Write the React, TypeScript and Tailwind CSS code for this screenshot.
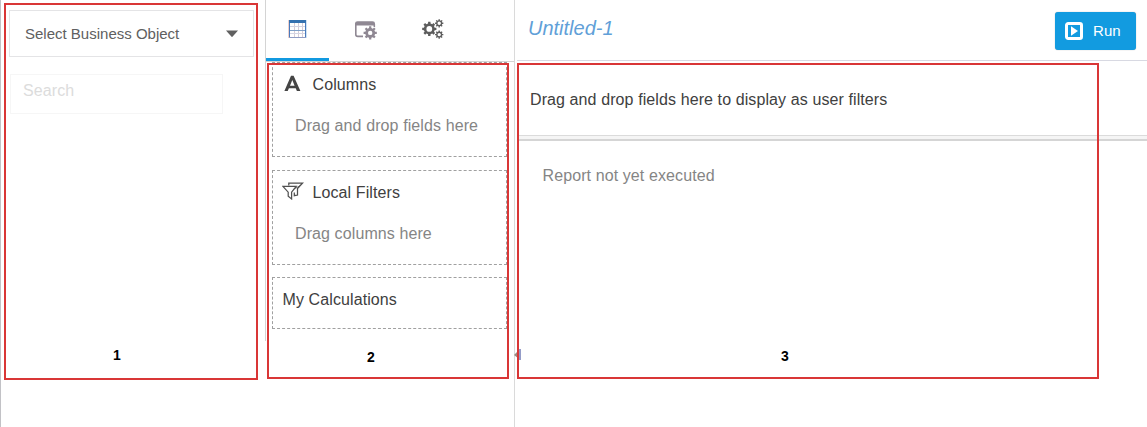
import React from "react";

function Zone({ className, children }: { className: string; children: React.ReactNode }) {
  return (
    <section className={`ml-[6px] w-[235px] shrink-0 border border-dashed border-[#a0a0a0] ${className}`}>
      {children}
    </section>
  );
}

function GridIcon() {
  return (
    <svg width="20" height="18" viewBox="0 0 20 18" shapeRendering="crispEdges">
      <rect x="1" y="0" width="18" height="18" fill="#fff" />
      <path d="M6.5 3v14M10.5 3v14M14.5 3v14" stroke="#d8cdd6" />
      <path d="M2 6.5h16M2 13.5h16" stroke="#d3d5e4" />
      <path d="M2 10.5h16" stroke="#7fa0c8" />
      <path d="M.5 0v18" stroke="#ecd0cc" />
      <path d="M18.5 0v18" stroke="#cfe3f5" />
      <path d="M1.5 0v18M17.5 0v18" stroke="#4a7abc" />
      <path d="M1 17.5h17" stroke="#8f9cc4" />
      <rect x="1" y="0" width="17" height="3" fill="#3572b0" />
    </svg>
  );
}

function gearPath(cx: number, cy: number, ro: number, ri: number, teeth: number, hole: number) {
  let d = "";
  for (let i = 0; i < teeth; i++) {
    const a = (i * 2 * Math.PI) / teeth;
    const s = Math.PI / teeth;
    const pts: [number, number][] = [
      [ri, a - s * 0.58],
      [ro, a - s * 0.42],
      [ro, a + s * 0.42],
      [ri, a + s * 0.58],
    ];
    for (const [r, t] of pts) {
      d += `${d ? "L" : "M"}${(cx + r * Math.cos(t)).toFixed(2)} ${(cy + r * Math.sin(t)).toFixed(2)}`;
    }
  }
  return `${d}ZM${cx - hole} ${cy}a${hole} ${hole} 0 1 0 ${2 * hole} 0a${hole} ${hole} 0 1 0 ${-2 * hole} 0Z`;
}

function WindowGearIcon() {
  return (
    <svg width="23" height="20" viewBox="0 0 23 20">
      <path d="M0 4a2.5 2.5 0 0 1 2.5-2.7h15A2.5 2.5 0 0 1 20 4v1.5H0Z" fill="#8f8893" />
      <path d="M.8 4v10.5q0 1.9 2 1.9H8M19.3 4v3" fill="none" stroke="#8f8893" strokeWidth="1.6" />
      <circle cx="15.2" cy="12.9" r="7" fill="#fff" />
      <path d={gearPath(15.2, 12.9, 6.7, 5, 8, 2.2)} fill="#8f8893" fillRule="evenodd" />
    </svg>
  );
}

function GearsIcon() {
  return (
    <svg width="22" height="20" viewBox="0 0 22 20" fill="#5d5d5d" fillRule="evenodd">
      <path d={gearPath(7.3, 9.9, 7.2, 5.5, 8, 2.9)} />
      <path d={gearPath(17.2, 4.3, 4.2, 3.1, 8, 1.7)} />
      <path d={gearPath(17.2, 15.6, 4.2, 3.1, 8, 1.7)} />
    </svg>
  );
}

function FiltersIcon() {
  return (
    <svg className="-mt-[3px]" width="22" height="18" viewBox="0 0 22 18" fill="none" stroke="#505050" strokeWidth="1.25">
      <path d="M6.8 3.4V1H20.6L15.5 6.6V13L12.3 13.7V10.6" />
      <path d="M.9 4.4H14.2L9.6 10.2V16.9L6.2 14.2V10.2Z" fill="#fff" />
      <path d="M11.6 7.2L18 3.8" strokeWidth=".8" />
    </svg>
  );
}

export default function App() {
  return (
    <div className="relative flex h-[427px] w-[1147px] overflow-hidden bg-white font-['Liberation_Sans',Arial,sans-serif] text-[16px] leading-[18px] tracking-[0.1px] text-[#404040]">
      <aside className="w-[265px] shrink-0 border-l border-[#c2c2c6] pl-2 pt-[10px]">
        <button className="flex h-[47px] w-[245px] items-center justify-between border border-[#e4e4e6] pl-[15px] pr-[15px] text-left text-[15px] tracking-normal text-[#606060]">
          <span>Select Business Object</span>
          <svg width="12" height="7" viewBox="0 0 12 7"><path d="M0 .5h12L6.7 6.6q-.7.7-1.4 0Z" fill="#606060" /></svg>
        </button>
        <input placeholder="Search" className="ml-px mt-[17px] block h-10 w-[213px] border border-[#f6f6f6] pb-[6px] pl-[12px] text-[16px] outline-none placeholder:text-[#dcdcdc]" />
      </aside>

      <div className="flex w-[249px] shrink-0 flex-col">
        <div className="h-[341px] border-l border-[#d4d4d4]">
          <nav className="flex h-[62px] w-[248px] border-b border-[#d4d4d4]">
            <div className="h-[61px] w-[63px] border-b-[3px] border-[#1199e0] pl-[22px] pt-5"><GridIcon /></div>
            <div className="w-[67px] pl-[26px] pt-[20px]"><WindowGearIcon /></div>
            <div className="pl-[26px] pt-[19px]"><GearsIcon /></div>
          </nav>
          <Zone className="h-[95px]">
            <div className="flex h-[44px] items-center pl-[11px]">
              <svg className="-mt-[3px]" width="17" height="17" viewBox="0 0 17 17"><path d="M7 .8H9.6L16.4 16H12.9L11.7 13.2H4.9L3.7 16H.4ZM8.3 5L6 10.7H10.6Z" fill="#454545" fillRule="evenodd" /></svg>
              <span className="ml-[11.5px]">Columns</span>
            </div>
            <p className="pl-[22px] pt-[10px] text-[#858585]">Drag and drop fields here</p>
          </Zone>
          <Zone className="mt-[13px] h-[95px]">
            <div className="flex h-[42px] items-center pl-[9px]">
              <FiltersIcon />
              <span className="ml-[8.5px] mt-[2px]">Local Filters</span>
            </div>
            <p className="pl-[22px] pt-[12px] text-[#858585]">Drag columns here</p>
          </Zone>
          <Zone className="mt-3 h-[52px] pl-[9.5px] pt-[13px]">My Calculations</Zone>
        </div>
      </div>

      <main className="flex-1 border-l border-[#dadada] pl-[2px]">
        <header className="flex h-[61px] items-start justify-between border-b border-[#d8d9e2] pl-[11px] pr-[11px]">
          <h1 className="pt-[16px] text-[20px] italic leading-[24px] tracking-normal text-[#619fd8]">Untitled-1</h1>
          <button className="mt-3 flex h-[38px] w-[81px] items-center rounded-[3px] bg-[#129be0] pl-[10px] text-[15px] text-white shadow-[0_0_1px_#999]">
            <svg width="18" height="18" viewBox="0 0 18 18">
              <rect x="1.5" y="1.5" width="15" height="15" rx="1.7" fill="none" stroke="#fff" strokeWidth="3" />
              <path d="M6 4.2L13 9L6 13.8Z" fill="#fff" />
            </svg>
            <span className="ml-[10px]">Run</span>
          </button>
        </header>
        <div className="flex h-[74px] items-center pl-[13px] pt-[3px]">Drag and drop fields here to display as user filters</div>
        <div className="ml-[2px] h-[6px] border-b-2 border-t border-b-[#d5d5d5] border-t-[#dbdbdb] bg-[#f5f5f5]" />
        <p className="pl-[25.5px] pt-[26px] text-[#858585]">Report not yet executed</p>
      </main>

      <svg className="absolute left-[514px] top-[349px]" width="7" height="12" viewBox="0 0 7 12">
        <path d="M0 6L5 1V10Z" fill="#988a82" /><path d="M5 0h2v11H5Z" fill="#949cc8" />
      </svg>
      <div className="absolute left-[4px] top-[3px] h-[377px] w-[254px] border-2 border-[#d93636]" />
      <div className="absolute left-[267px] top-[63px] h-[316px] w-[242px] border-2 border-[#d93636]" />
      <div className="absolute left-[517px] top-[63px] h-[316px] w-[582px] border-2 border-[#d93636]" />
      <b className="absolute left-[113px] top-[346px] text-[14px] text-black">1</b>
      <b className="absolute left-[367px] top-[348px] text-[14px] text-black">2</b>
      <b className="absolute left-[781px] top-[347px] text-[14px] text-black">3</b>
    </div>
  );
}
